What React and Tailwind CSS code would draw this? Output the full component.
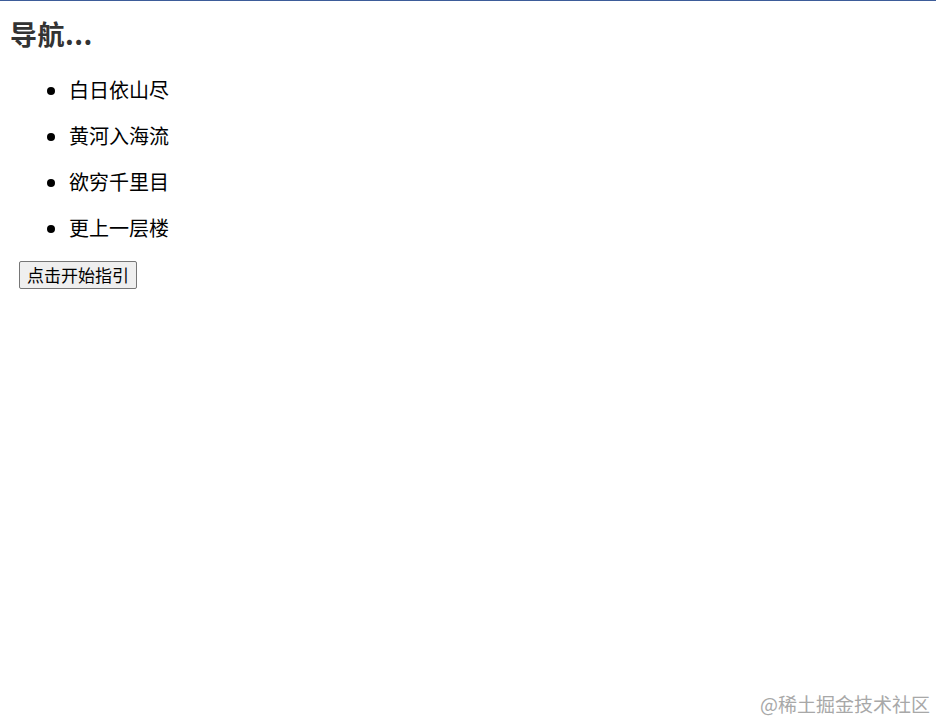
import React from "react";

const items = ["白日依山尽", "黄河入海流", "欲穷千里目", "更上一层楼"];

export default function App() {
  return (
    <div className="relative w-[936px] h-[720px] bg-white overflow-hidden font-['Noto_Sans_CJK_SC',sans-serif] text-black">
      <div className="h-px bg-[#3d5c99]" />
      <div className="flex flex-col items-start px-[10px]">
        <h1 className="mt-[17px] text-[27px] leading-[32px] font-bold text-[#333] tracking-[0.5px]">
          导航...
        </h1>
        <ul className="mt-[26px] pl-[59px] list-disc flex flex-col gap-[18px]">
          {items.map((t) => (
            <li key={t} className="text-[20px] leading-[28px]">
              {t}
            </li>
          ))}
        </ul>
        <button className="mt-[19px] ml-[9px] h-[28px] px-[7px] text-[17px] leading-[22px] bg-[#efefef] border border-[#767676] rounded-[2px]">
          点击开始指引
        </button>
      </div>
      <div className="absolute right-[6px] bottom-[4px] text-[19px] leading-[24px] text-[#a8a8a8]">
        @稀土掘金技术社区
      </div>
    </div>
  );
}
